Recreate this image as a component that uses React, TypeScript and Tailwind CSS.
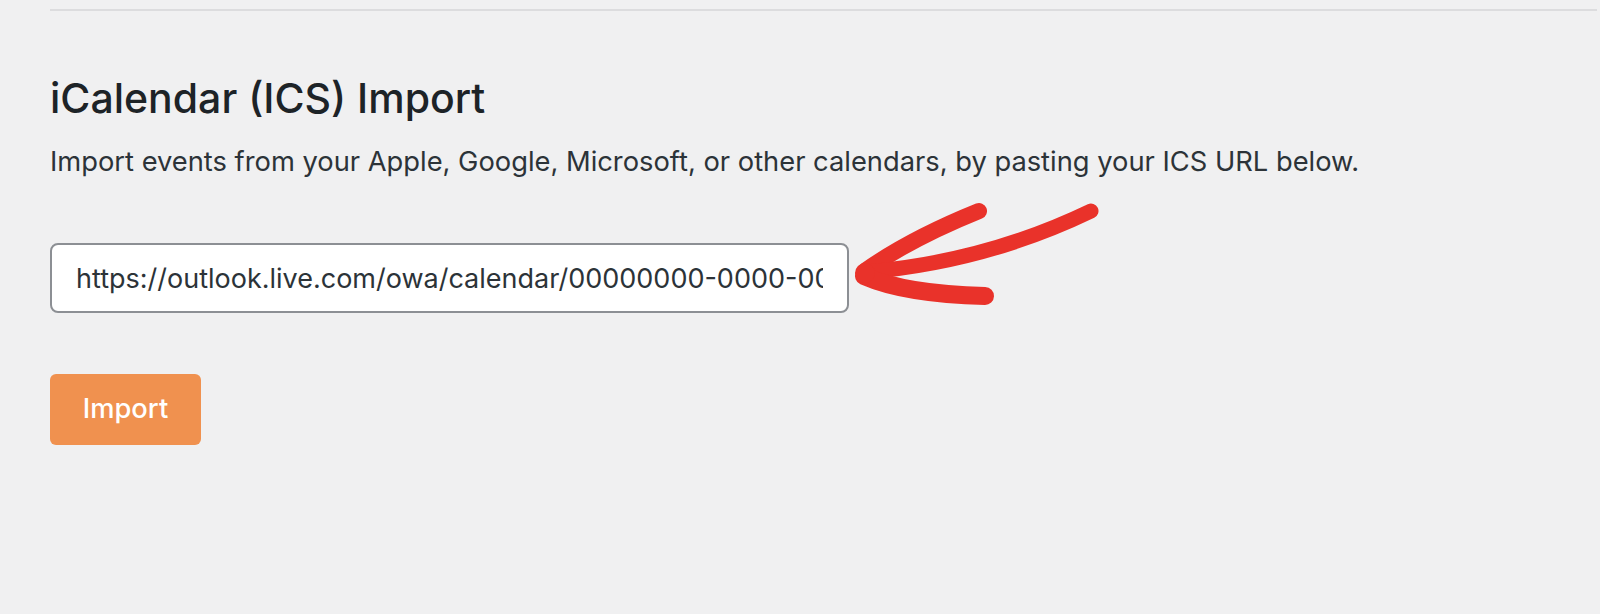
import React from 'react';

// Hand-drawn red annotation arrow pointing at the URL field
function ArrowMark() {
  return (
    <svg
      className="absolute left-0 top-0 pointer-events-none"
      width="1600"
      height="614"
      viewBox="0 0 1600 614"
      fill="none"
    >
      <g stroke="#e9322a" strokeLinecap="round" strokeLinejoin="round">
        <path d="M866 270 Q912 238 979 211" strokeWidth="16" />
        <path d="M866 272 Q985 262 1091 211" strokeWidth="15" />
        <path d="M864 276 Q905 294 985 296" strokeWidth="18" />
        <circle cx="865" cy="273" r="10" fill="#e9322a" stroke="none" />
      </g>
    </svg>
  );
}

export default function App() {
  return (
    <div className="relative min-h-[614px] w-full overflow-hidden bg-[#f0f0f1] font-['Inter',sans-serif]">
      <div className="pl-[50px] pr-[3px] pt-[9px]">
        <div className="h-[2px] bg-[#dcdcde]" />

        <h2 className="mt-[61px] text-[41px] leading-[52px] font-medium text-[#1d2327]">
          iCalendar (ICS) Import
        </h2>

        <p className="mt-[18px] text-[27.3px] leading-[40px] text-[#2c3338]">
          Import events from your Apple, Google, Microsoft, or other calendars, by pasting your ICS URL below.
        </p>

        <input
          type="text"
          readOnly
          defaultValue="https://outlook.live.com/owa/calendar/00000000-0000-0000-0000-000000000000/calendar.ics"
          className="mt-[61px] block h-[70px] w-[799px] rounded-[8px] border-2 border-[#8c8f94] bg-white px-[24px] text-[27px] text-[#2c3338] outline-none"
        />

        <button
          type="button"
          className="mt-[61px] flex h-[71px] w-[151px] items-center justify-center rounded-[6px] bg-[#f0914f] text-[27.3px] font-medium text-white"
        >
          Import
        </button>
      </div>

      <ArrowMark />
    </div>
  );
}
